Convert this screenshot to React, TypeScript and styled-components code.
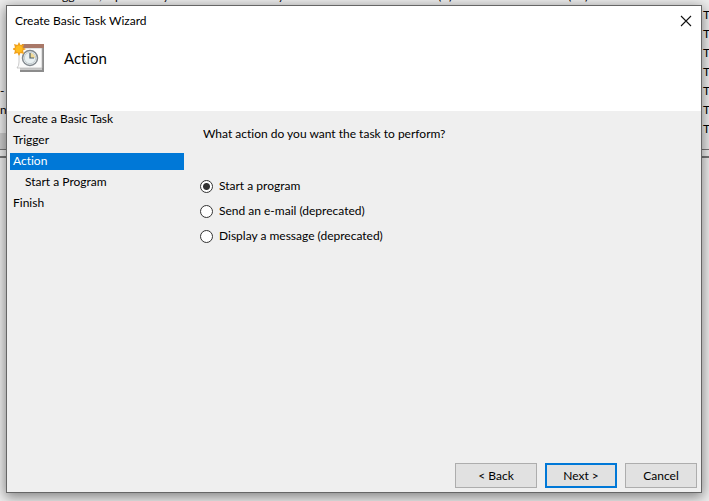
import React, { useState } from "react";
import styled, { createGlobalStyle } from "styled-components";

const GlobalStyle = createGlobalStyle`
  * { box-sizing: border-box; }
  html, body, #root { height: 100%; margin: 0; }
  body {
    background: #f0f0f0;
    color: #000;
    font-family: Lato, "Open Sans", sans-serif;
    font-size: 12px;
    font-variant-ligatures: none;
    line-height: 16px;
    overflow: hidden;
  }
  button, input { font: inherit; color: inherit; }
`;

const Desktop = styled.div`
  display: grid;
  height: 100%;
  padding: 5px 7px 8px 6px;
`;

const Backdrop = styled.div`
  position: absolute;
  inset: 0;
  overflow: hidden;
  background: #eeeeee;
`;

const BackHeading = styled.div`
  display: grid;
  grid-template-columns: 37px 16px 48px 115px 160px 11px 119px 17px 128px 1fr;
  height: 5px;
  padding-left: 62px;
  line-height: 16px;
  white-space: nowrap;

  span { margin-top: -12px; }
`;

const BackRows = styled.div`
  display: flex;
  justify-content: space-between;
  height: 128px;
  line-height: 19px;
`;

const BackColumn = styled.div<{ $top?: number }>`
  display: flex;
  flex-direction: column;
  width: 6px;
  padding-top: ${(p) => p.$top ?? 0}px;
  white-space: nowrap;
`;

const BackScroll = styled.div`
  height: 16px;
  background: linear-gradient(90deg, #cdcdcd 50%, #e8e8e8 50%);
`;

const BackSplitter = styled.div`
  height: 9px;
  border: solid #777;
  border-width: 1px 0 2px;
`;

const Dialog = styled.section`
  position: relative;
  display: flex;
  flex-direction: column;
  border: 1px solid #666;
  background: #efefef;
  box-shadow: 0 3px 12px 1px rgba(0, 0, 0, 0.45);
`;

const Header = styled.header`
  display: flex;
  flex-direction: column;
  height: 105px;
  background: #fff;
`;

const TitleBar = styled.div`
  display: flex;
  align-items: center;
  justify-content: space-between;
  height: 30px;
  padding: 0 8px;
`;

const Title = styled.span``;

const CloseButton = styled.button`
  display: grid;
  place-items: center;
  width: 14px;
  height: 14px;
  padding: 0;
  border: 0;
  background: none;
`;

const Banner = styled.div`
  display: flex;
  gap: 18px;
  padding: 5px 6px;
`;

const PageTitle = styled.h1`
  margin: 7px 0 0;
  font-size: 15px;
  font-weight: 400;
  line-height: 20px;
`;

const Body = styled.div`
  display: flex;
  flex: 1;
`;

const Steps = styled.nav`
  display: flex;
  flex-direction: column;
  gap: 4px;
  width: 180px;
  padding: 0 3px;
`;

const Step = styled.a<{ $active?: boolean; $nested?: boolean }>`
  height: 17px;
  padding-left: ${(p) => (p.$nested ? 15 : 3)}px;
  background: ${(p) => (p.$active ? "#0078d7" : "transparent")};
  color: ${(p) => (p.$active ? "#fff" : "#000")};
  text-decoration: none;
`;

const Choices = styled.fieldset`
  display: flex;
  flex: 1;
  flex-direction: column;
  gap: 9px;
  margin: 0;
  padding: 15px 13px;
  border: 0;
`;

const Question = styled.legend`
  float: left;
  margin-bottom: 27px;
  padding: 0 3px;
`;

const Choice = styled.label`
  display: flex;
  align-items: center;
  gap: 6px;
  height: 16px;
`;

const Radio = styled.input`
  appearance: none;
  width: 13px;
  height: 13px;
  margin: 0;
  border: 1px solid #333;
  border-radius: 50%;
  background: #fff;

  &:checked {
    background: radial-gradient(circle, #333 3px, #fff 4px);
  }
`;

const Footer = styled.footer`
  display: flex;
  justify-content: flex-end;
  gap: 8px;
  padding: 0 4px;
  margin-bottom: 4px;
`;

const Button = styled.button<{ $primary?: boolean; $wide?: boolean }>`
  width: ${(p) => (p.$wide ? 82 : 72)}px;
  height: 25px;
  padding: 0;
  border: ${(p) => (p.$primary ? "2px solid #0078d7" : "1px solid #adadad")};
  background: #e1e1e1;
`;

const TaskIcon = () => (
  <svg width="33" height="33" viewBox="0 0 33 33" aria-hidden="true">
    <path d="M7 4h24v27H7z" fill="#8c8c8c" />
    <path d="M7 27h22v2H7z" fill="#c9c9c9" />
    <path d="M6 7h23v20H4q2-2 2-6z" fill="#fafafa" stroke="#b5b5b5" strokeWidth=".7" />
    <path d="M9 3h22v4H9z" fill="#a97868" />
    <circle cx="17" cy="17" r="7.5" fill="#f2f6f6" stroke="#81888e" strokeWidth="1.5" />
    <circle cx="17" cy="17" r="5.7" fill="#e9f0f2" stroke="#b8c2c6" strokeWidth=".8" />
    <path d="M17 17v-5a5 5 0 0 1 5 5z" fill="#f0d995" />
    <path d="M17 12v5h4" fill="none" stroke="#4c5e6c" strokeWidth="1.2" />
    <path d="m6 1 1.500 3L11 3l-1 3.500L13 8l-3 1.500 1 3.500-3.500-1L6 15l-1.500-3L1 13l1-3.500L-1 8l3-1.500L1 3l3.500 1z" fill="#f0a01c" />
    <circle cx="6" cy="8" r="3.500" fill="#ffbc20" />
  </svg>
);

const STEPS = [
  { label: "Create a Basic Task" },
  { label: "Trigger" },
  { label: "Action", active: true },
  { label: "Start a Program", nested: true },
  { label: "Finish" },
];

const ACTIONS = ["Start a program", "Send an e-mail (deprecated)", "Display a message (deprecated)"];
const HEADINGS = ["gg", ",", "p", "y", "y", "(", ")", "(", ")", "("];

export default function App() {
  const [action, setAction] = useState(ACTIONS[0]);
  return (
    <Desktop>
      <GlobalStyle />
      <Backdrop aria-hidden="true">
        <BackHeading>{HEADINGS.map((h, i) => <span key={i}>{h}</span>)}</BackHeading>
        <BackRows>
          <BackColumn $top={76}><span>-</span><span>ne</span></BackColumn>
          <BackColumn>{Array.from({ length: 7 }, (_, i) => <span key={i}>T</span>)}</BackColumn>
        </BackRows>
        <BackScroll />
        <BackSplitter />
      </Backdrop>
      <Dialog role="dialog" aria-label="Create Basic Task Wizard">
        <Header>
          <TitleBar>
            <Title>Create Basic Task Wizard</Title>
            <CloseButton aria-label="Close">
              <svg width="12" height="12" viewBox="0 0 12 12"><path d="m1 1 10 10M11 1 1 11" stroke="#111" strokeWidth="1.1" /></svg>
            </CloseButton>
          </TitleBar>
          <Banner><TaskIcon /><PageTitle>Action</PageTitle></Banner>
        </Header>
        <Body>
          <Steps>
            {STEPS.map((s) => <Step key={s.label} href="#" $active={s.active} $nested={s.nested}>{s.label}</Step>)}
          </Steps>
          <Choices>
            <Question>What action do you want the task to perform?</Question>
            {ACTIONS.map((a) => (
              <Choice key={a}>
                <Radio type="radio" name="action" checked={a === action} onChange={() => setAction(a)} />
                {a}
              </Choice>
            ))}
          </Choices>
        </Body>
        <Footer>
          <Button $wide>&lt; Back</Button>
          <Button $primary>Next &gt;</Button>
          <Button>Cancel</Button>
        </Footer>
      </Dialog>
    </Desktop>
  );
}
